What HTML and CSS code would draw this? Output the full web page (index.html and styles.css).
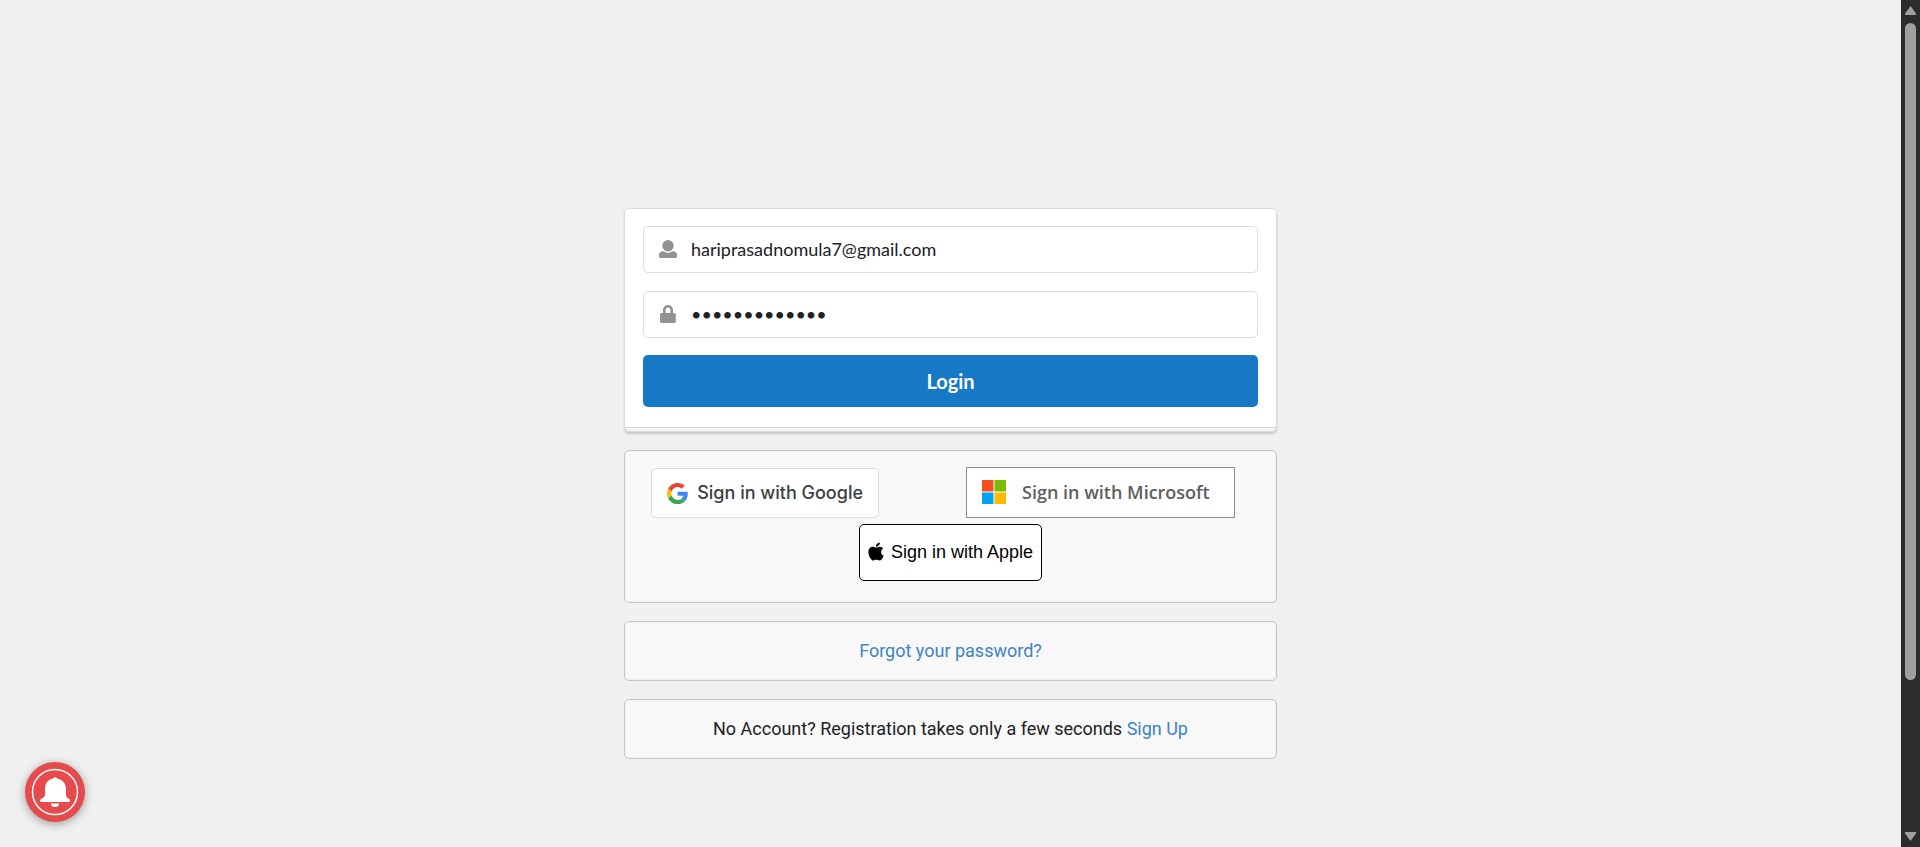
FILE: index.html
```html
<!DOCTYPE html>
<html lang="en">
<head>
<meta charset="utf-8">
<meta name="viewport" content="width=device-width, initial-scale=1">
<title>Login</title>
<link rel="stylesheet" href="styles.css">
</head>
<body class="page">
<main class="content">
  <div class="column">
    <form class="card">
      <div class="card-body">
        <div class="fields">
          <label class="field">
            <svg class="field-icon" viewBox="0 0 18 18" role="img" aria-label="Email"><circle cx="9" cy="5.7" r="5.7"/><path d="M0 15.500V15a4 4 0 0 1 4-3.700h.6a7 7 0 0 0 8.800 0h.6a4 4 0 0 1 4 3.700v1.500A1.500 1.500 0 0 1 16.500 18h-15A1.500 1.500 0 0 1 0 16.500z"/></svg>
            <input class="input" type="email" value="hariprasadnomula7@gmail.com">
          </label>
          <label class="field">
            <svg class="field-icon" viewBox="0 0 18 18" role="img" aria-label="Password"><path fill-rule="evenodd" d="M2.600 7.900H4V5a5 5 0 0 1 10 0v2.900h1.200a1.600 1.600 0 0 1 1.600 1.600v6.900a1.600 1.600 0 0 1-1.600 1.600H2.600A1.600 1.600 0 0 1 1 16.400V9.500a1.600 1.600 0 0 1 1.600-1.600zM6.600 7.900h4.800V5a2.400 2.400 0 0 0-4.800 0z"/></svg>
            <input class="input" type="password" value="passwordabcde">
          </label>
        </div>
        <button class="login" type="submit">Login</button>
      </div>
      <div class="card-foot"></div>
    </form>

    <section class="panel social">
      <div class="social-pair">
        <button class="social-btn google" type="button">
          <svg class="google-logo" viewBox="0 0 48 48" aria-hidden="true"><path fill="#ea4335" d="M24 9.500c3.540 0 6.710 1.220 9.210 3.600l6.850-6.850C35.900 2.380 30.470 0 24 0 14.620 0 6.510 5.380 2.560 13.220l7.980 6.190C12.430 13.720 17.740 9.500 24 9.500z"/><path fill="#4285f4" d="M46.980 24.550c0-1.570-.15-3.090-.38-4.550H24v9.020h12.940c-.58 2.960-2.260 5.480-4.780 7.180l7.730 6c4.510-4.180 7.090-10.360 7.090-17.650z"/><path fill="#fbbc05" d="M10.530 28.590a14.500 14.500 0 0 1 0-9.180l-7.980-6.190a24 24 0 0 0 0 21.560z"/><path fill="#34a853" d="M24 48c6.480 0 11.930-2.130 15.890-5.810l-7.730-6c-2.150 1.450-4.920 2.300-8.160 2.300-6.260 0-11.570-4.220-13.470-9.910l-7.980 6.190C6.510 42.620 14.620 48 24 48z"/></svg>
          <span>Sign in with Google</span>
        </button>
        <button class="social-btn microsoft" type="button">
          <svg class="ms-logo" viewBox="0 0 24 24" aria-hidden="true"><path fill="#f25022" d="M0 0h11.500v11.500H0z"/><path fill="#7fba00" d="M12.500 0H24v11.500H12.500z"/><path fill="#00a4ef" d="M0 12.500h11.500V24H0z"/><path fill="#ffb900" d="M12.500 12.500H24V24H12.500z"/></svg>
          <span>Sign in with Microsoft</span>
        </button>
      </div>
      <button class="social-btn apple" type="button">
        <svg class="apple-logo" viewBox="0 0 384 470" aria-hidden="true"><path transform="translate(0 -22)" d="M318.700 268.700c-.2-36.700 16.400-64.400 50-84.800-18.800-26.900-47.200-41.700-84.700-44.600-35.500-2.800-74.300 20.700-88.500 20.700-15 0-49.400-19.700-76.400-19.700C63.300 141.200 4 184.800 4 273.500q0 39.300 14.400 81.200c12.800 36.700 59 126.700 107.200 125.200 25.200-.6 43-17.900 75.800-17.900 31.800 0 48.300 17.900 76.400 17.900 48.600-.7 90.400-82.500 102.600-119.300-65.200-30.700-61.700-90-61.700-91.900zm-56.600-164.200c27.300-32.400 24.800-61.900 24-72.500-24.100 1.400-52 16.400-67.900 34.900-17.500 19.800-27.800 44.300-25.600 71.900 26.100 2 49.900-11.400 69.500-34.300z"/></svg>
        <span>Sign in with Apple</span>
      </button>
    </section>

    <section class="panel"><a class="link" href="#">Forgot your password?</a></section>
    <section class="panel"><p class="note">No Account? Registration takes only a few seconds <a class="link" href="#">Sign Up</a></p></section>
  </div>
</main>

<div class="scrollbar" aria-hidden="true">
  <svg class="arrow" viewBox="0 0 13 10"><path d="M6.500.5 12 8v1.500H1V8z"/></svg>
  <div class="track"><div class="thumb"></div></div>
  <svg class="arrow" viewBox="0 0 13 10"><path d="M6.500 9.500 12 2V.5H1V2z"/></svg>
</div>

<button class="bell" type="button" aria-label="Notifications">
  <svg class="bell-icon" viewBox="0 0 60 60"><circle cx="30" cy="30" r="22.500" fill="none" stroke="#fff" stroke-width="1.500"/><path fill="#fff" d="M28 16.500a2.300 2.300 0 0 1 4 0c5.300.9 9 5 9 10.500v6c0 2 .8 2.700 3.800 4.500v2.500H15.200v-2.500c3-1.800 4.800-2.500 4.800-4.500v-6c0-5.500 3-9.600 8-10.500zM26 41.500h8a4 3.500 0 0 1-8 0z"/></svg>
</button>
</body>
</html>
```
FILE: styles.css
```css
* { box-sizing: border-box; }

.page {
  margin: 0;
  display: flex;
  height: 100vh;
  overflow: hidden;
  background: #f0f0f0;
  color: #212121;
  font-family: Roboto, sans-serif;
  font-size: 18px;
  line-height: 26px;
}

.content {
  flex: 1;
  padding: 208px 16px 0;
}

.column {
  max-width: 653px;
  margin: 0 auto;
  display: flex;
  flex-direction: column;
  gap: 18px;
}

.card {
  border: 1px solid #d9dadb;
  border-radius: 5px;
  background: #f5f5f5;
  box-shadow: 0 2px 2px #c8c8c8;
  overflow: hidden;
}

.card-body {
  display: flex;
  flex-direction: column;
  gap: 17px;
  padding: 17px 18px 20px;
  background: #fff;
  border-bottom: 1px solid #d4d4d5;
}

.fields {
  display: flex;
  flex-direction: column;
  gap: 18px;
}

.card-foot { height: 3px; }

.field {
  display: flex;
  align-items: center;
  gap: 14px;
  height: 47px;
  padding: 0 15px 2px;
  border: 1px solid #dcdde0;
  border-radius: 5px;
}

.field-icon {
  width: 18px;
  height: 18px;
  fill: #929292;
}

.input {
  flex: 1;
  min-width: 0;
  padding: 0;
  border: 0;
  outline: 0;
  background: none;
  color: #212121;
  font: 18px/24px Lato, sans-serif;
}

.login {
  height: 52px;
  border: 0;
  border-radius: 5px;
  background: #1779c6;
  color: #fff;
  font: bold 20px/24px Lato, sans-serif;
}

.panel {
  padding: 16px 17px;
  border: 1px solid #c6c6c7;
  border-radius: 5px;
  background: #f8f8f8;
  box-shadow: inset 0 0 0 1px #f0f0f0;
  text-align: center;
}

.note { margin: 0; }

.link {
  color: #4183c4;
  text-decoration: none;
}

.social {
  display: flex;
  flex-direction: column;
  align-items: center;
  gap: 6px;
  padding: 16px 41px 21px 26px;
}

.social-pair {
  align-self: stretch;
  display: flex;
  justify-content: space-between;
  align-items: flex-end;
}

.social-btn {
  display: flex;
  align-items: center;
  background: #fff;
  white-space: nowrap;
}

.google {
  gap: 9px;
  width: 228px;
  height: 50px;
  padding: 0 15px;
  border: 1px solid #dadce0;
  border-radius: 5px;
  color: #3c4043;
  font: 500 18px/24px Inter, sans-serif;
}

.google-logo { width: 23px; height: 23px; }

.microsoft {
  gap: 16px;
  width: 269px;
  height: 51px;
  padding: 0 15px 2px;
  border: 1px solid #8c8c8c;
  color: #5e5e5e;
  font: 600 18px/24px "Open Sans", sans-serif;
}

.ms-logo { width: 24px; height: 24px; }

.apple {
  gap: 7px;
  height: 57px;
  margin-left: 15px;
  padding: 0 8px 2px;
  border: 1px solid #000;
  border-radius: 5px;
  color: #000;
  font: 18px/24px "Liberation Sans", sans-serif;
}

.apple-logo { width: 16px; height: 19px; }

.scrollbar {
  width: 19px;
  padding: 5px 0;
  display: flex;
  flex-direction: column;
  align-items: center;
  gap: 7px;
  background: #2c2c2c;
}

.arrow {
  width: 13px;
  height: 11px;
  fill: #9f9f9f;
}

.track { flex: 1; }

.thumb {
  width: 11px;
  height: 82%;
  border-radius: 6px;
  background: #9f9f9f;
}

.bell {
  position: fixed;
  left: 25px;
  bottom: 25px;
  width: 60px;
  height: 60px;
  padding: 0;
  border: 0;
  border-radius: 50%;
  background: #e54b4d;
  box-shadow: 0 2px 10px rgba(0, 0, 0, 0.35);
}

.bell-icon { display: block; }
```
